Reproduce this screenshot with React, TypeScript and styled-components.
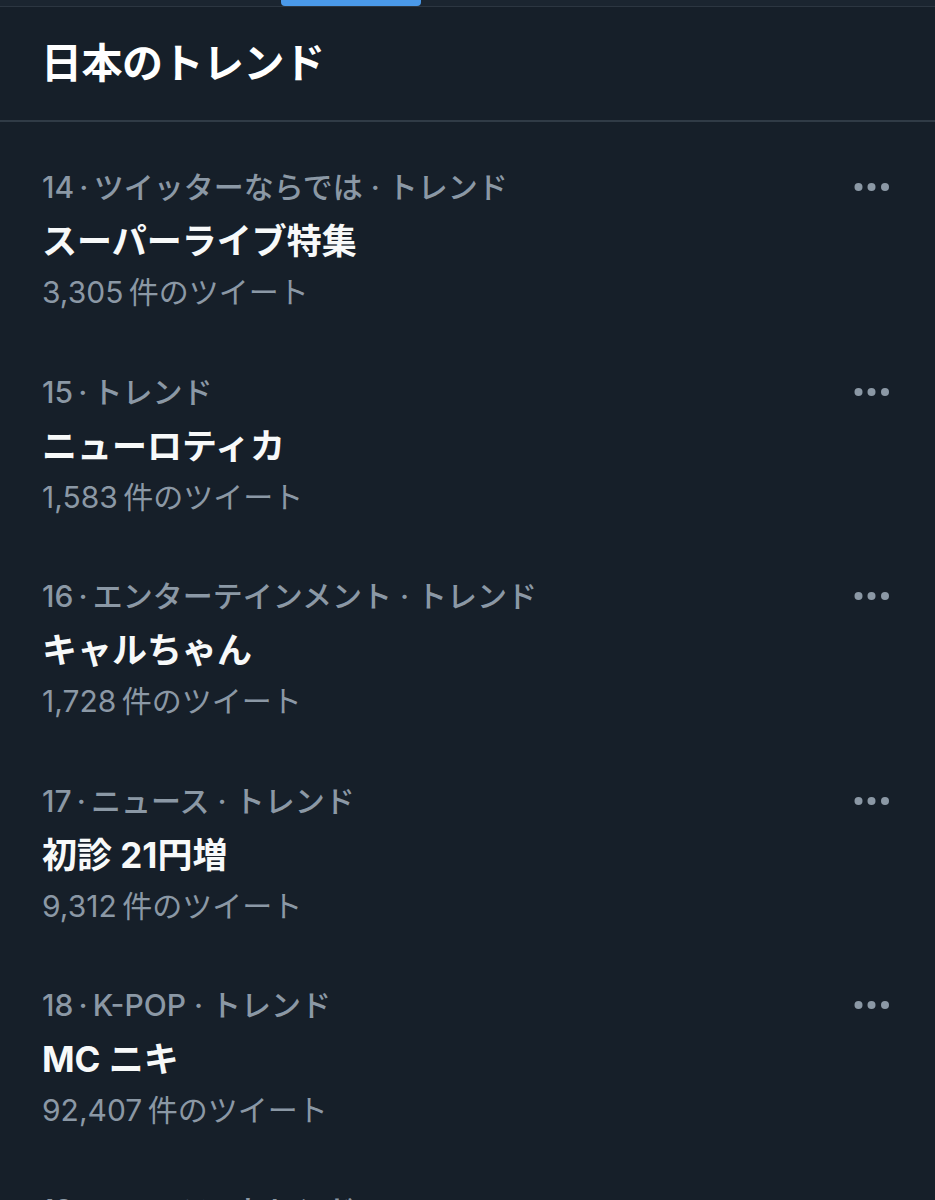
import React from "react";
import styled, { createGlobalStyle } from "styled-components";

const GlobalStyle = createGlobalStyle`
  html, body { margin: 0; padding: 0; background: #161f29; }
  body { font-family: Inter, "Noto Sans CJK JP", sans-serif; -webkit-font-smoothing: antialiased; }
  * { box-sizing: border-box; }
`;

const Page = styled.div`
  width: 935px;
  height: 1200px;
  overflow: hidden;
  background: #161f29;
  color: #f7f9f9;
  font-family: Inter, "Noto Sans CJK JP", sans-serif;
`;

const TabStrip = styled.div`
  height: 7px;
  background: #1b2530;
  border-bottom: 1px solid #2c3641;
  display: flex;
  padding-left: 281px;
`;

const TabIndicator = styled.div`
  width: 140px;
  height: 6px;
  background: #4a99e9;
  border-radius: 0 0 4px 4px;
`;

const Header = styled.div`
  height: 115px;
  display: flex;
  align-items: center;
  padding: 0 42px 8px 41px;
  border-bottom: 2px solid #303b46;
`;

const HeaderTitle = styled.h1`
  margin: 0;
  font-size: 41px;
  font-weight: 700;
  letter-spacing: -0.5px;
  color: #ffffff;
  font-family: "Noto Sans CJK JP", sans-serif;
`;

const List = styled.div`
  padding-top: 14px;
`;

const Row = styled.div`
  display: flex;
  align-items: flex-start;
  padding: 25px 45px 25.5px 42px;
`;

const Body = styled.div`
  flex: 1;
  display: flex;
  flex-direction: column;
`;

const Meta = styled.div`
  font-size: 30px;
  font-weight: 500;
  line-height: 52px;
  height: 52px;
  color: #8b98a5;
  white-space: nowrap;
`;

const Title = styled.div`
  font-size: 35px;
  font-weight: 700;
  line-height: 56px;
  height: 56px;
  color: #f7f9f9;
  white-space: nowrap;
`;

const Count = styled.div`
  font-size: 30px;
  line-height: 46px;
  height: 46px;
  color: #8b98a5;
  white-space: nowrap;
`;

const MoreButton = styled.div`
  width: 40px;
  height: 52px;
  display: flex;
  align-items: center;
  justify-content: flex-end;
  color: #8b98a5;
`;

const Dots = () => (
  <svg width="36" height="10" viewBox="0 0 36 10">
    <circle cx="4.5" cy="5" r="4" fill="currentColor" />
    <circle cx="17.5" cy="5" r="4" fill="currentColor" />
    <circle cx="31" cy="5" r="4" fill="currentColor" />
  </svg>
);

type Trend = { rank: number; category?: string; title: string; count: string };

const trends: Trend[] = [
  { rank: 14, category: "ツイッターならでは", title: "スーパーライブ特集", count: "3,305" },
  { rank: 15, title: "ニューロティカ", count: "1,583" },
  { rank: 16, category: "エンターテインメント", title: "キャルちゃん", count: "1,728" },
  { rank: 17, category: "ニュース", title: "初診 21円増", count: "9,312" },
  { rank: 18, category: "K-POP", title: "MC ニキ", count: "92,407" },
  { rank: 19, category: "ニュース", title: "", count: "" },
];

export default function App() {
  return (
    <Page>
      <GlobalStyle />
      <TabStrip>
        <TabIndicator />
      </TabStrip>
      <Header>
        <HeaderTitle>日本のトレンド</HeaderTitle>
      </Header>
      <List>
        {trends.map((t) => (
          <Row key={t.rank}>
            <Body>
              <Meta>
                {t.rank}
                {"\u2009·\u2009"}
                {t.category ? `${t.category} · ` : ""}
                トレンド
              </Meta>
              <Title>{t.title}</Title>
              <Count>{t.count ? `${t.count}\u2009件のツイート` : ""}</Count>
            </Body>
            <MoreButton>
              <Dots />
            </MoreButton>
          </Row>
        ))}
      </List>
    </Page>
  );
}
